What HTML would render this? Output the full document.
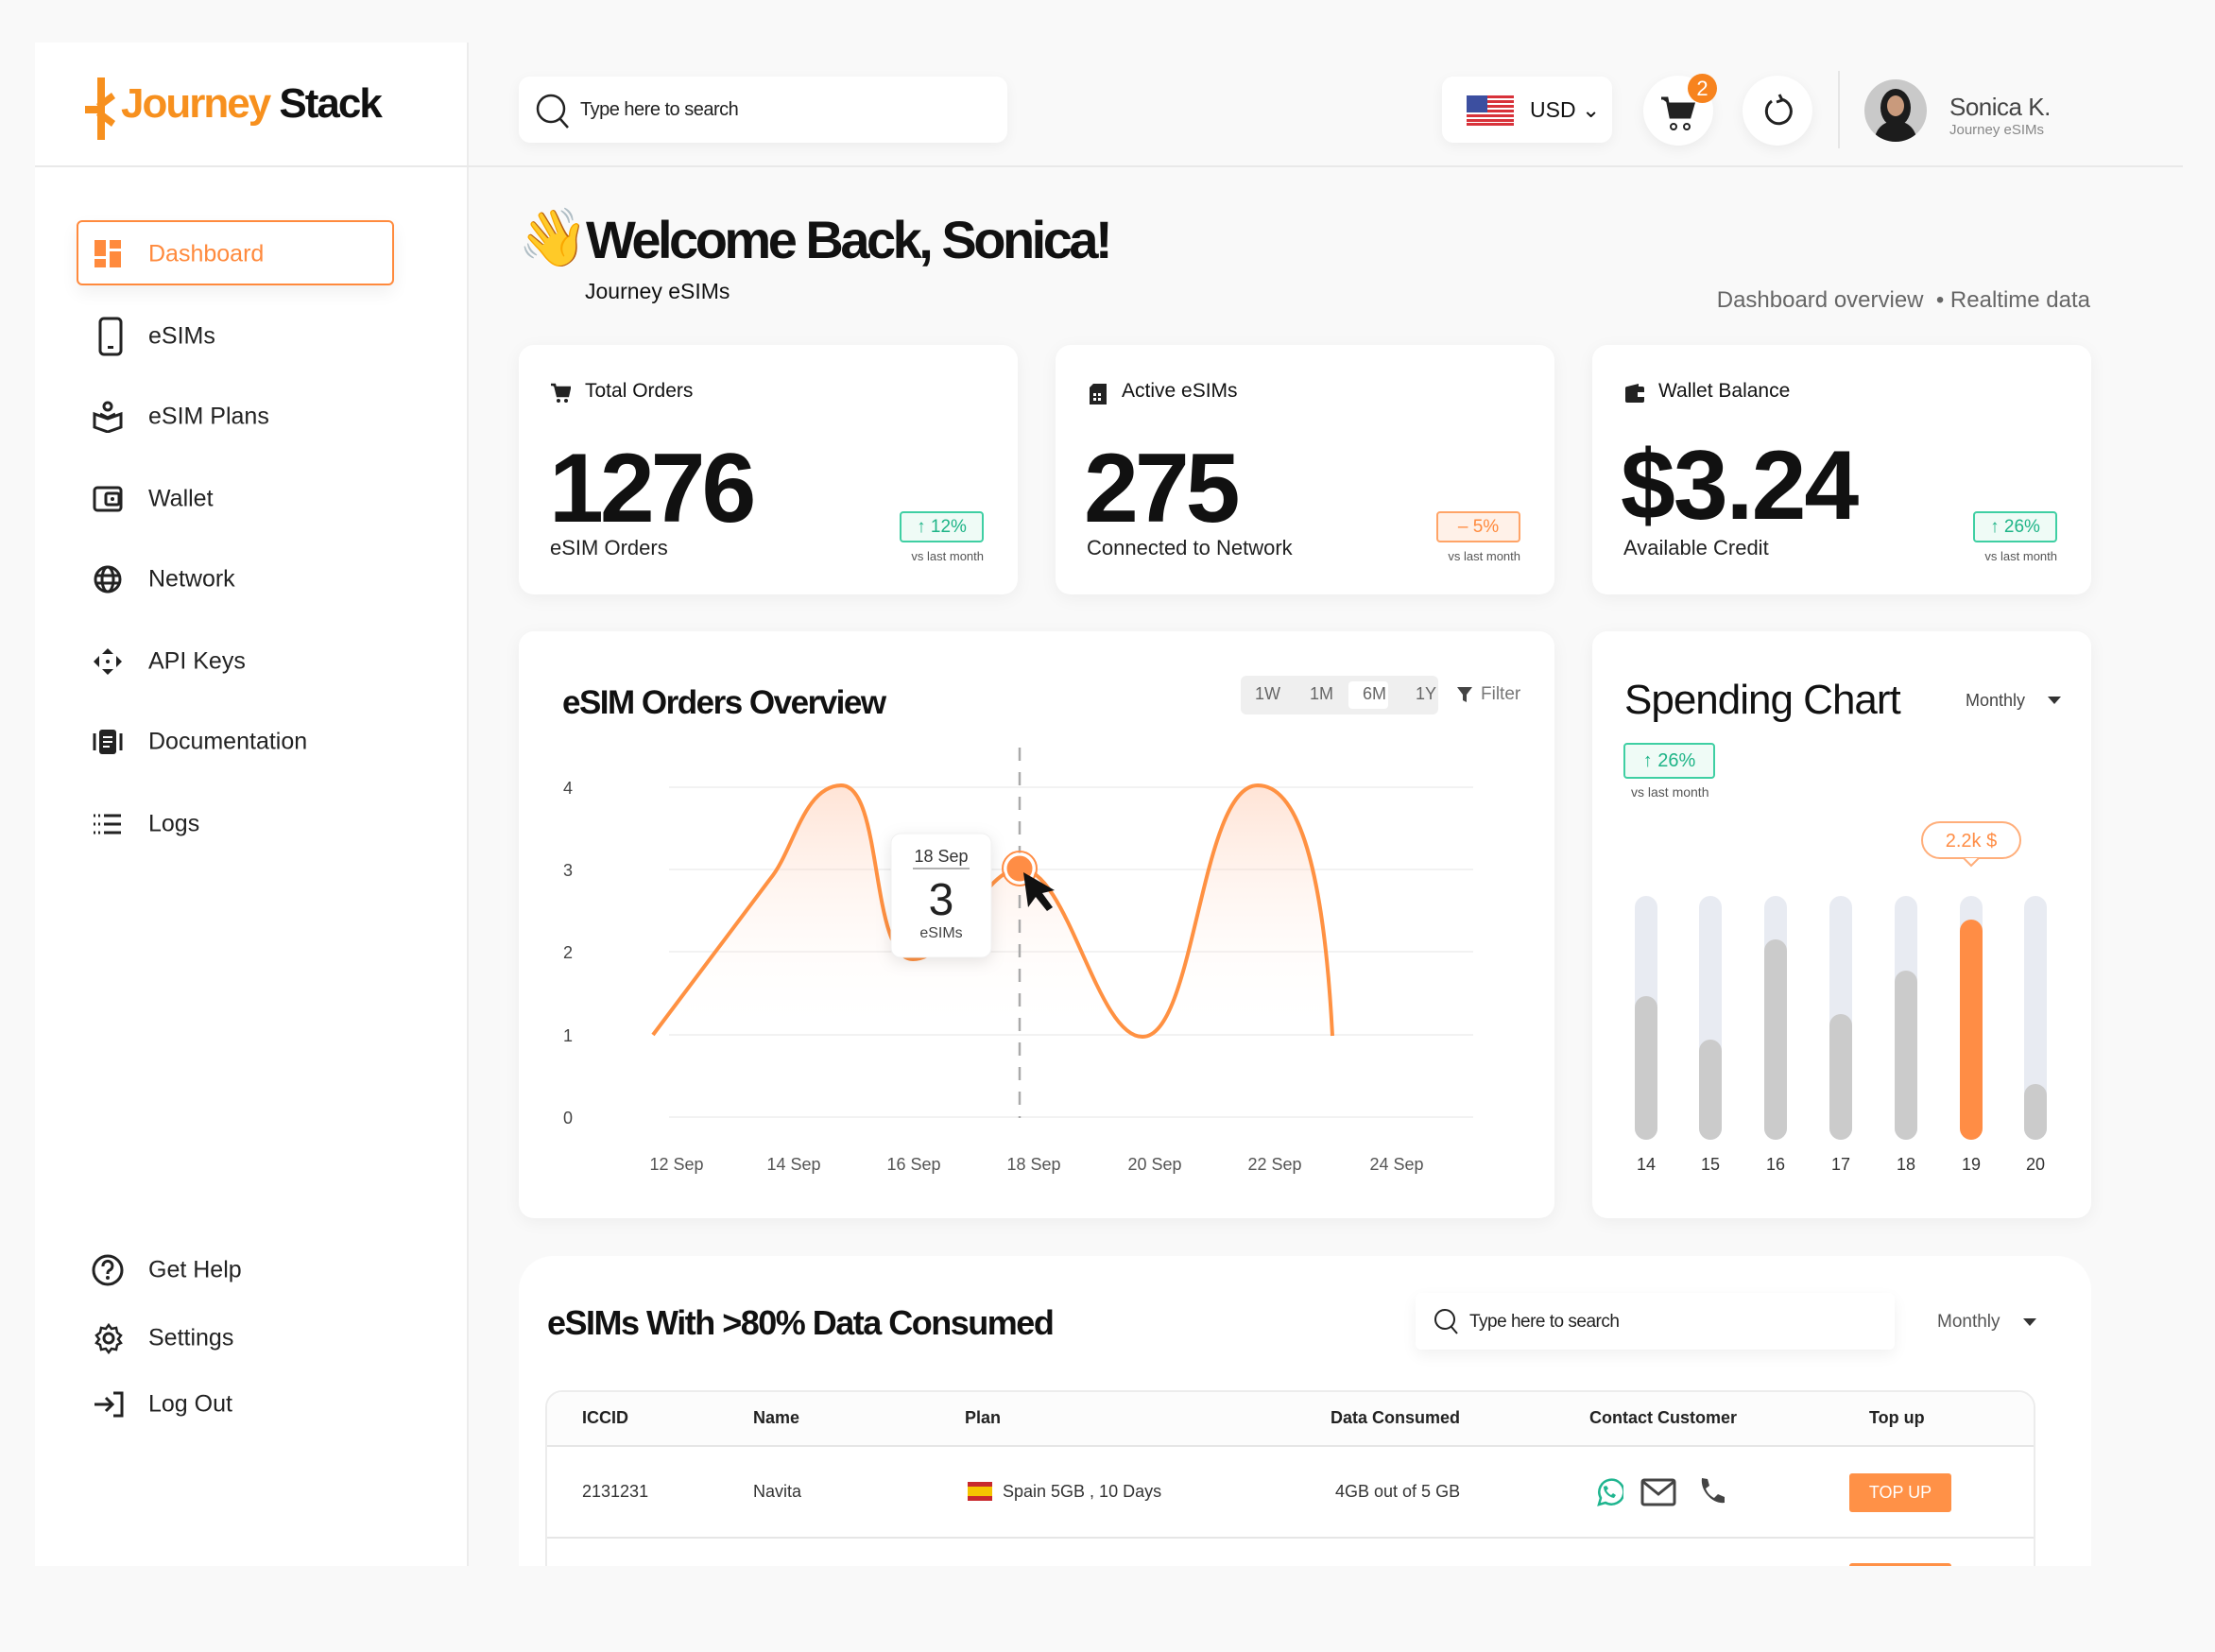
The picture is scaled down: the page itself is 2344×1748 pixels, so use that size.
<!DOCTYPE html>
<html><head><meta charset="utf-8"><style>
*{margin:0;padding:0;box-sizing:border-box}
body{width:2344px;height:1748px;background:#f9f9f9;font-family:"Liberation Sans",sans-serif;color:#111;position:relative;overflow:hidden}
.a{position:absolute}
.clip{position:absolute;left:0;top:0;width:2344px;height:1657px;overflow:hidden}
.card{position:absolute;background:#fff;border-radius:16px;box-shadow:0 4px 18px rgba(0,0,0,.05)}
.nav{position:absolute;left:157px;font-size:25px;color:#222;transform:translateY(-50%)}
.ico{position:absolute;left:98px;transform:translateY(-50%)}
.lbl{position:absolute;font-size:21px;color:#111}
.big{position:absolute;font-size:104px;font-weight:bold;letter-spacing:-4px;line-height:1}
.sub{position:absolute;font-size:22px;color:#222}
.badge{position:absolute;width:89px;height:33px;border:2px solid #3fcfa3;border-radius:4px;background:#effbf6;color:#1eb487;font-size:19px;text-align:center;line-height:29px}
.vs{position:absolute;font-size:13px;color:#555;width:100px;text-align:right}
.th{position:absolute;top:1490px;font-size:18px;font-weight:bold;color:#222}
.td{position:absolute;top:1568px;font-size:18px;color:#333}
</style></head><body>
<div class="clip">
<div class="a" style="left:37px;top:45px;width:458px;height:1620px;background:#fff"></div>
<div class="a" style="left:494px;top:45px;width:2px;height:1620px;background:#ececec"></div>
<div class="a" style="left:37px;top:175px;width:2273px;height:2px;background:#e9e9e9"></div>
<svg class="a" style="left:88px;top:80px" width="40" height="70" viewBox="0 0 40 70"><rect x="15" y="2" width="8" height="66" fill="#f7901e"/><path d="M2 32h14v8H2z M14 30 L30 18 L34 24 L18 36z M14 42 L30 54 L34 48 L18 36z" fill="#f7901e"/></svg>
<div class="a" style="left:128px;top:88px;font-size:44px;font-weight:bold;letter-spacing:-2px;line-height:1"><span style="color:#f7901e">Journey</span> <span style="color:#111">Stack</span></div>
<div class="a" style="left:81px;top:233px;width:336px;height:69px;border:2px solid #ff8a3d;border-radius:6px;box-shadow:0 8px 18px rgba(0,0,0,.06)"></div>
<svg class="ico" style="top:269px;left:100px" width="30" height="30"><rect x="0" y="0" width="12" height="17" fill="#ff8a3d"/><rect x="16" y="0" width="12" height="9" fill="#ff8a3d"/><rect x="0" y="20" width="12" height="9" fill="#ff8a3d"/><rect x="16" y="12" width="12" height="17" fill="#ff8a3d"/></svg>
<div class="nav" style="top:269px;color:#ff8a3d">Dashboard</div>
<svg class="ico" style="top:356px;left:104px" width="26" height="42"><rect x="2" y="2" width="22" height="38" rx="4" fill="none" stroke="#222" stroke-width="3"/><rect x="10" y="31" width="6" height="3" fill="#222"/></svg>
<div class="nav" style="top:356px">eSIMs</div>
<svg class="ico" style="top:441px" width="32" height="34" viewBox="0 0 32 34"><circle cx="16" cy="6" r="4" fill="none" stroke="#222" stroke-width="3"/><path d="M2 14v14l14 5 14-5V14l-14 5z M8 14l8 4 8-4" fill="none" stroke="#222" stroke-width="3"/></svg>
<div class="nav" style="top:441px">eSIM Plans</div>
<svg class="ico" style="top:528px" width="32" height="28"><rect x="2" y="2" width="28" height="24" rx="3" fill="none" stroke="#222" stroke-width="3"/><rect x="14" y="8" width="14" height="12" rx="2" fill="none" stroke="#222" stroke-width="3"/><circle cx="21" cy="14" r="2" fill="#222"/></svg>
<div class="nav" style="top:528px">Wallet</div>
<svg class="ico" style="top:613px" width="32" height="32"><circle cx="16" cy="16" r="13" fill="none" stroke="#222" stroke-width="3"/><ellipse cx="16" cy="16" rx="6" ry="13" fill="none" stroke="#222" stroke-width="3"/><path d="M3 12h26M3 20h26" stroke="#222" stroke-width="3"/></svg>
<div class="nav" style="top:613px">Network</div>
<svg class="ico" style="top:700px" width="32" height="30"><path d="M16 1l6 6h-12z M16 29l6-6h-12z M1 15l6-6v12z M31 15l-6-6v12z" fill="#222"/><circle cx="16" cy="15" r="2" fill="#222"/></svg>
<div class="nav" style="top:700px">API Keys</div>
<svg class="ico" style="top:785px" width="32" height="30"><rect x="7" y="2" width="18" height="26" rx="3" fill="#222"/><path d="M2 6v18M30 6v18" stroke="#222" stroke-width="3"/><path d="M11 10h10M11 15h10M11 20h7" stroke="#fff" stroke-width="2"/></svg>
<div class="nav" style="top:785px">Documentation</div>
<svg class="ico" style="top:872px" width="32" height="24"><path d="M1 3h2M6 3h2M12 3h18M1 12h2M6 12h2M12 12h18M1 21h2M6 21h2M12 21h18" stroke="#222" stroke-width="3"/></svg>
<div class="nav" style="top:872px">Logs</div>
<svg class="ico" style="top:1344px;left:96px" width="36" height="36"><circle cx="18" cy="18" r="15" fill="none" stroke="#222" stroke-width="3"/><path d="M13 14a5 5 0 1 1 7 4c-2 1-2 2-2 4" fill="none" stroke="#222" stroke-width="3"/><circle cx="18" cy="26" r="2" fill="#222"/></svg>
<div class="nav" style="top:1344px">Get Help</div>
<svg class="ico" style="top:1416px" width="34" height="34" viewBox="0 0 34 34"><circle cx="17" cy="17" r="5" fill="none" stroke="#222" stroke-width="3"/><path d="M17 3l3 4 5-1 1 5 4 3-3 4 3 4-4 2-1 5-5-1-3 4-3-4-5 1-1-5-4-2 3-4-3-4 4-3 1-5 5 1z" fill="none" stroke="#222" stroke-width="2.5"/></svg>
<div class="nav" style="top:1416px">Settings</div>
<svg class="ico" style="top:1486px" width="34" height="30"><path d="M2 15h18M14 8l7 7-7 7" fill="none" stroke="#222" stroke-width="3"/><path d="M22 3h9v24h-9" fill="none" stroke="#222" stroke-width="3"/></svg>
<div class="nav" style="top:1486px">Log Out</div>

<div class="a" style="left:549px;top:81px;width:517px;height:70px;background:#fff;border-radius:12px;box-shadow:0 4px 14px rgba(0,0,0,.05)"></div>
<svg class="a" style="left:566px;top:98px" width="38" height="40"><circle cx="17" cy="17" r="14" fill="none" stroke="#222" stroke-width="2.5"/><path d="M27 28l8 9" stroke="#222" stroke-width="2.5"/></svg>
<div class="a" style="left:614px;top:105px;font-size:20px;color:#222;letter-spacing:-0.5px">Type here to search</div>
<div class="a" style="left:1526px;top:81px;width:180px;height:70px;background:#fff;border-radius:12px;box-shadow:0 4px 14px rgba(0,0,0,.05)"></div>
<svg class="a" style="left:1552px;top:101px" width="50" height="32"><rect width="50" height="32" fill="#fff"/><g fill="#d8323a"><rect y="0" width="50" height="3"/><rect y="5" width="50" height="3"/><rect y="10" width="50" height="3"/><rect y="15" width="50" height="3"/><rect y="20" width="50" height="3"/><rect y="25" width="50" height="3"/><rect y="29" width="50" height="3"/></g><rect width="22" height="18" fill="#3c4fa0"/></svg>
<div class="a" style="left:1619px;top:103px;font-size:23px;color:#111">USD ⌄</div>
<div class="a" style="left:1739px;top:80px;width:74px;height:74px;border-radius:50%;background:#fff;box-shadow:0 4px 14px rgba(0,0,0,.06)"></div>
<svg class="a" style="left:1756px;top:100px" width="40" height="40"><path d="M2 4h6l4 20h20l4-14H10" fill="#222" stroke="#222" stroke-width="3"/><circle cx="15" cy="34" r="3" fill="none" stroke="#222" stroke-width="2"/><circle cx="29" cy="34" r="3" fill="none" stroke="#222" stroke-width="2"/></svg>
<div class="a" style="left:1786px;top:78px;width:31px;height:31px;border-radius:50%;background:#f7831e;color:#fff;font-size:22px;text-align:center;line-height:31px">2</div>
<div class="a" style="left:1844px;top:80px;width:74px;height:74px;border-radius:50%;background:#fff;box-shadow:0 4px 14px rgba(0,0,0,.06)"></div>
<svg class="a" style="left:1863px;top:99px" width="38" height="38"><path d="M12 8a13 13 0 1 0 10-2" fill="none" stroke="#222" stroke-width="3"/><path d="M20 1l3 6-6 2" fill="none" stroke="#222" stroke-width="3"/></svg>
<div class="a" style="left:1945px;top:75px;width:2px;height:82px;background:#e6e6e6"></div>
<svg class="a" style="left:1973px;top:84px" width="66" height="66"><defs><clipPath id="av"><circle cx="33" cy="33" r="33"/></clipPath></defs><g clip-path="url(#av)"><rect width="66" height="66" fill="#c9c9c9"/><ellipse cx="33" cy="30" rx="16" ry="20" fill="#1c1c1c"/><ellipse cx="33" cy="28" rx="9" ry="11" fill="#c99a7c"/><path d="M10 66c2-16 12-22 23-22s21 6 23 22z" fill="#1c1c1c"/></g></svg>
<div class="a" style="left:2063px;top:98px;font-size:26px;color:#444;letter-spacing:-0.5px">Sonica K.</div>
<div class="a" style="left:2063px;top:129px;font-size:15px;color:#888">Journey eSIMs</div>

<div class="a" style="left:548px;top:222px;font-size:60px;line-height:1;font-family:'Noto Color Emoji',sans-serif">👋</div>
<div class="a" style="left:620px;top:226px;font-size:56px;font-weight:bold;letter-spacing:-3.5px;line-height:1">Welcome Back, Sonica!</div>
<div class="a" style="left:619px;top:295px;font-size:23px">Journey eSIMs</div>
<div class="a" style="left:1700px;top:304px;width:512px;text-align:right;font-size:24px;color:#666">Dashboard overview &nbsp;• Realtime data</div>

<div class="card" style="left:549px;top:365px;width:528px;height:264px">
 <svg class="a" style="left:33px;top:40px" width="22" height="22"><path d="M1 2h4l3 12h11l2-9H6" fill="#222" stroke="#222" stroke-width="2.5"/><circle cx="9" cy="19" r="2" fill="#222"/><circle cx="17" cy="19" r="2" fill="#222"/></svg>
 <div class="lbl" style="left:70px;top:37px">Total Orders</div>
 <div class="big" style="left:32px;top:100px">1276</div>
 <div class="sub" style="left:33px;top:202px">eSIM Orders</div>
 <div class="badge" style="left:403px;top:176px">↑ 12%</div>
 <div class="vs" style="left:392px;top:216px">vs last month</div>
</div>
<div class="card" style="left:1117px;top:365px;width:528px;height:264px">
 <svg class="a" style="left:35px;top:40px" width="20" height="24"><path d="M5 1h14v22H1V5z" fill="#222"/><g fill="#fff"><rect x="5" y="11" width="3" height="3"/><rect x="10" y="11" width="3" height="3"/><rect x="5" y="16" width="3" height="3"/><rect x="10" y="16" width="3" height="3"/></g></svg>
 <div class="lbl" style="left:70px;top:37px">Active eSIMs</div>
 <div class="big" style="left:30px;top:100px">275</div>
 <div class="sub" style="left:33px;top:202px">Connected to Network</div>
 <div class="badge" style="left:403px;top:176px;border-color:#ffa467;background:#fff1e8;color:#ff8a3d">– 5%</div>
 <div class="vs" style="left:392px;top:216px">vs last month</div>
</div>
<div class="card" style="left:1685px;top:365px;width:528px;height:264px">
 <svg class="a" style="left:34px;top:40px" width="22" height="22"><rect x="1" y="4" width="20" height="17" rx="2" fill="#222"/><path d="M3 4l12-3v3" fill="#222"/><rect x="14" y="10" width="7" height="5" fill="#fff"/></svg>
 <div class="lbl" style="left:70px;top:37px">Wallet Balance</div>
 <div class="big" style="left:30px;top:97px;letter-spacing:-2px">$3.24</div>
 <div class="sub" style="left:33px;top:202px">Available Credit</div>
 <div class="badge" style="left:403px;top:176px">↑ 26%</div>
 <div class="vs" style="left:392px;top:216px">vs last month</div>
</div>

<div class="card" style="left:549px;top:668px;width:1096px;height:621px"></div>
<div class="card" style="left:1685px;top:668px;width:528px;height:621px"></div>
<div class="a" style="left:595px;top:724px;font-size:35px;font-weight:bold;letter-spacing:-1.5px">eSIM Orders Overview</div>
<div class="a" style="left:1313px;top:715px;width:209px;height:41px;background:#efefef;border-radius:6px"></div>
<div class="a" style="left:1427px;top:721px;width:42px;height:29px;background:#fff;border-radius:4px"></div>
<div class="a" style="left:1328px;top:724px;font-size:18px;color:#666;word-spacing:26px">1W 1M 6M 1Y</div>
<svg class="a" style="left:1541px;top:725px" width="18" height="20"><path d="M1 2h16l-6 8v8l-4-2v-6z" fill="#444"/></svg>
<div class="a" style="left:1567px;top:724px;font-size:19px;color:#777">Filter</div>
<div class="a" style="left:1719px;top:716px;font-size:44px;letter-spacing:-1px;color:#111">Spending Chart</div>
<div class="a" style="left:2080px;top:731px;font-size:18px;color:#444">Monthly</div>
<svg class="a" style="left:2166px;top:735px" width="16" height="12"><path d="M1 2h14L8 10z" fill="#333"/></svg>
<div class="badge" style="left:1718px;top:786px;width:97px;height:38px;line-height:34px;font-size:20px">↑ 26%</div>
<div class="a" style="left:1726px;top:830px;font-size:14px;color:#555">vs last month</div>

<svg class="a" style="left:0;top:0" width="2344" height="1657">
 <defs><linearGradient id="g" x1="0" y1="0" x2="0" y2="1"><stop offset="0" stop-color="#ffb088" stop-opacity=".35"/><stop offset="1" stop-color="#fff" stop-opacity="0"/></linearGradient></defs>
 <g stroke="#eeeeee" stroke-width="1.5"><path d="M708 833H1559M708 920H1559M708 1007H1559M708 1095H1559M708 1182H1559"/></g>
 <g font-size="18" fill="#444" font-family="Liberation Sans"><text x="596" y="840">4</text><text x="596" y="927">3</text><text x="596" y="1014">2</text><text x="596" y="1102">1</text><text x="596" y="1189">0</text></g>
 <g font-size="18" fill="#555" font-family="Liberation Sans" text-anchor="middle"><text x="716" y="1238">12 Sep</text><text x="840" y="1238">14 Sep</text><text x="967" y="1238">16 Sep</text><text x="1094" y="1238">18 Sep</text><text x="1222" y="1238">20 Sep</text><text x="1349" y="1238">22 Sep</text><text x="1478" y="1238">24 Sep</text></g>
 <path d="M691 1095 L815 930 C840 900 850 832 890 831 C935 830 920 1015 966 1015 C1010 1015 1040 920 1079 919 C1130 918 1160 1097 1209 1097 C1265 1097 1270 831 1331 831 C1390 831 1405 1000 1410 1096" fill="url(#g)" stroke="none"/>
 <path d="M691 1095 L815 930 C840 900 850 832 890 831 C935 830 920 1015 966 1015 C1010 1015 1040 920 1079 919 C1130 918 1160 1097 1209 1097 C1265 1097 1270 831 1331 831 C1390 831 1405 1000 1410 1096" fill="none" stroke="#ff9142" stroke-width="4"/>
 <path d="M1079 791V1183" stroke="#aaa" stroke-width="2.5" stroke-dasharray="14 12"/>
 <rect x="943" y="882" width="106" height="131" rx="10" fill="#fff" stroke="#f0f0f0" style="filter:drop-shadow(0 4px 8px rgba(0,0,0,.1))"/>
 <text x="996" y="912" font-size="18" text-anchor="middle" fill="#333" font-family="Liberation Sans">18 Sep</text>
 <path d="M966 919h60" stroke="#999" stroke-width="1.5"/>
 <text x="996" y="968" font-size="48" text-anchor="middle" fill="#222" font-family="Liberation Sans">3</text>
 <text x="996" y="992" font-size="16" text-anchor="middle" fill="#444" font-family="Liberation Sans">eSIMs</text>
 <circle cx="1079" cy="919" r="15" fill="#ff8d45" stroke="#fff" stroke-width="3"/><circle cx="1079" cy="919" r="18" fill="none" stroke="#ff8d45" stroke-width="2"/>
 <path d="M1083 923l5 37 8-11 12 15 6-4-11-15 13-3z" fill="#111"/>
 <g stroke-linecap="round" stroke-width="24">
  <path d="M1742 960V1194M1810 960V1194M1879 960V1194M1948 960V1194M2017 960V1194M2086 960V1194M2154 960V1194" stroke="#e8ebf2"/>
  <path d="M1742 1066V1194M1810 1112V1194M1879 1006V1194M1948 1085V1194M2017 1039V1194M2154 1159V1194" stroke="#cbcbcb"/>
  <path d="M2086 985V1194" stroke="#ff8d45"/>
 </g>
 <g font-size="18" fill="#333" font-family="Liberation Sans" text-anchor="middle"><text x="1742" y="1238">14</text><text x="1810" y="1238">15</text><text x="1879" y="1238">16</text><text x="1948" y="1238">17</text><text x="2017" y="1238">18</text><text x="2086" y="1238">19</text><text x="2154" y="1238">20</text></g>
 <rect x="2034" y="870" width="104" height="38" rx="19" fill="#fff" stroke="#ffae7a" stroke-width="2"/>
 <path d="M2078 908l8 8 8-8" fill="#fff" stroke="#ffae7a" stroke-width="2"/>
 <text x="2086" y="896" font-size="20" text-anchor="middle" fill="#ff8d45" font-family="Liberation Sans">2.2k $</text>
</svg>

<div class="a" style="left:549px;top:1329px;width:1664px;height:400px;background:#fff;border-radius:36px 36px 0 0"></div>
<div class="a" style="left:579px;top:1379px;font-size:36px;font-weight:bold;letter-spacing:-1.5px">eSIMs With &gt;80% Data Consumed</div>
<div class="a" style="left:1498px;top:1368px;width:507px;height:60px;background:#fff;border-radius:6px;box-shadow:0 6px 16px rgba(0,0,0,.06)"></div>
<svg class="a" style="left:1517px;top:1384px" width="28" height="30"><circle cx="12" cy="12" r="10" fill="none" stroke="#222" stroke-width="2"/><path d="M19 20l6 7" stroke="#222" stroke-width="2"/></svg>
<div class="a" style="left:1555px;top:1388px;font-size:19px;color:#222;letter-spacing:-0.5px">Type here to search</div>
<div class="a" style="left:2050px;top:1388px;font-size:19px;color:#555">Monthly</div>
<svg class="a" style="left:2140px;top:1393px" width="16" height="12"><path d="M1 2h14L8 10z" fill="#333"/></svg>
<div class="a" style="left:577px;top:1471px;width:1577px;height:260px;border:2px solid #ececec;border-radius:18px 18px 0 0"></div>
<div class="a" style="left:579px;top:1473px;width:1573px;height:56px;background:#fcfcfc;border-radius:16px 16px 0 0"></div>
<div class="a" style="left:579px;top:1529px;width:1573px;height:2px;background:#e6e6e6"></div>
<div class="a" style="left:579px;top:1626px;width:1573px;height:2px;background:#e6e6e6"></div>
<div class="th" style="left:616px">ICCID</div>
<div class="th" style="left:797px">Name</div>
<div class="th" style="left:1021px">Plan</div>
<div class="th" style="left:1408px">Data Consumed</div>
<div class="th" style="left:1682px">Contact Customer</div>
<div class="th" style="left:1978px">Top up</div>
<div class="td" style="left:616px">2131231</div>
<div class="td" style="left:797px">Navita</div>
<svg class="a" style="left:1024px;top:1568px" width="26" height="20"><rect width="26" height="20" fill="#c8282d"/><rect y="5" width="26" height="10" fill="#f5c400"/></svg>
<div class="td" style="left:1061px">Spain 5GB , 10 Days</div>
<div class="td" style="left:1413px">4GB out of 5 GB</div>
<svg class="a" style="left:1686px;top:1562px" width="32" height="34"><path d="M6 30l2-7a13 13 0 1 1 5 5z" fill="none" stroke="#1fb58f" stroke-width="2.5"/><path d="M11 11c0 6 5 11 11 12l2-3-3-2-2 2c-2-1-4-3-5-5l2-2-2-3z" fill="#1fb58f"/></svg>
<svg class="a" style="left:1736px;top:1564px" width="38" height="30"><rect x="2" y="2" width="34" height="26" rx="2" fill="none" stroke="#444" stroke-width="3"/><path d="M3 4l16 13 16-13" fill="none" stroke="#444" stroke-width="3"/></svg>
<svg class="a" style="left:1795px;top:1562px" width="30" height="32"><path d="M6 2l6 1 2 7-4 3c2 5 5 8 9 10l4-4 7 3v6c-12 2-26-12-24-26z" fill="#444"/></svg>
<div class="a" style="left:1957px;top:1559px;width:108px;height:41px;background:#ff9147;border-radius:3px;color:#fff;font-size:18px;text-align:center;line-height:41px">TOP UP</div>
<div class="a" style="left:1957px;top:1654px;width:108px;height:10px;background:#ff9147;border-radius:3px"></div>
</div>
</body></html>
